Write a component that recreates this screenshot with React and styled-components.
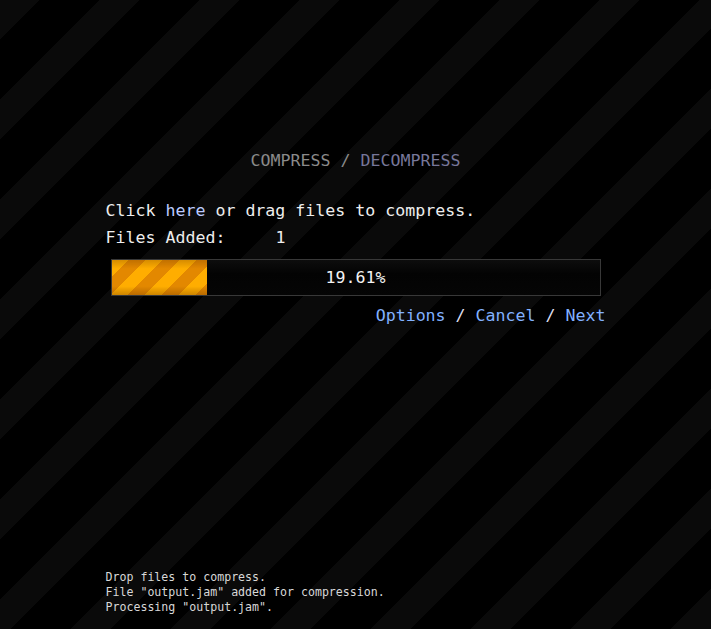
import styled, { createGlobalStyle } from 'styled-components';

const GlobalStyle = createGlobalStyle`
    html, body {
        margin: 0;
        padding: 0;
    }

    body {
        background-color: #000;
        background-image: repeating-linear-gradient(
            135deg,
            #0a0a0a 0px,
            #0a0a0a 28.28px,
            #000 28.28px,
            #000 70.71px
        );
        color: #eee;
        font-family: 'DejaVu Sans Mono', 'Liberation Mono', monospace;
    }
`;

const Page = styled.div`
    min-height: 100vh;
    display: flex;
    flex-direction: column;
    box-sizing: border-box;
    padding: 151px 0 14px;
`;

const Main = styled.div`
    width: 500px;
    margin: 0 auto;
    font-size: 16.6px;
`;

const Title = styled.div`
    text-align: center;
    line-height: 20px;
    color: #8a8a8a;
    margin-bottom: 26px;
`;

const Mode = styled.span`
    color: ${(p) => (p.$alt ? '#77779a' : '#8a8a8a')};
`;

const Line = styled.div`
    line-height: 27px;
    white-space: pre;
`;

const Here = styled.span`
    color: #bccbff;
`;

const Label = styled.span`
    display: inline-block;
    width: 170px;
`;

const Bar = styled.div`
    position: relative;
    margin: 8px 5px 0;
    height: 35px;
    border: 1px solid #383838;
    background: linear-gradient(to bottom, #0d0d0d, #030303 40%, #050505);
    display: flex;
    align-items: center;
    justify-content: center;
`;

const Fill = styled.div`
    position: absolute;
    left: 0;
    top: 0;
    bottom: 0;
    background-image: linear-gradient(
            to bottom,
            rgba(90, 40, 0, 0.25),
            rgba(0, 0, 0, 0) 25%,
            rgba(0, 0, 0, 0) 75%,
            rgba(90, 40, 0, 0.3)
        ),
        repeating-linear-gradient(
            135deg,
            #ffad00 0px,
            #ffad00 12px,
            #e38800 12px,
            #e38800 24px
        );
`;

const Percent = styled.span`
    position: relative;
    color: #f2f2f2;
`;

const Actions = styled.div`
    text-align: right;
    line-height: 20px;
    margin-top: 10px;
    color: #dde;
`;

const Action = styled.a`
    color: #82b1ff;
    text-decoration: none;
`;

const Log = styled.div`
    margin: auto auto 0;
    width: 500px;
    font-size: 11.6px;
    line-height: 15px;
    color: #d8d8d8;
`;

const progress = 19.61;

const App = () => {
    return (
        <Page>
            <GlobalStyle />
            <Main>
                <Title>
                    <Mode>COMPRESS</Mode> / <Mode $alt>DECOMPRESS</Mode>
                </Title>
                <Line>
                    Click <Here>here</Here> or drag files to compress.
                </Line>
                <Line>
                    <Label>Files Added:</Label>1
                </Line>
                <Bar>
                    <Fill style={{ width: `${progress}%` }} />
                    <Percent>{progress.toFixed(2)}%</Percent>
                </Bar>
                <Actions>
                    <Action>Options</Action> / <Action>Cancel</Action> / <Action>Next</Action>
                </Actions>
            </Main>
            <Log>
                <div>Drop files to compress.</div>
                <div>File "output.jam" added for compression.</div>
                <div>Processing "output.jam".</div>
            </Log>
        </Page>
    );
};

export default App;
